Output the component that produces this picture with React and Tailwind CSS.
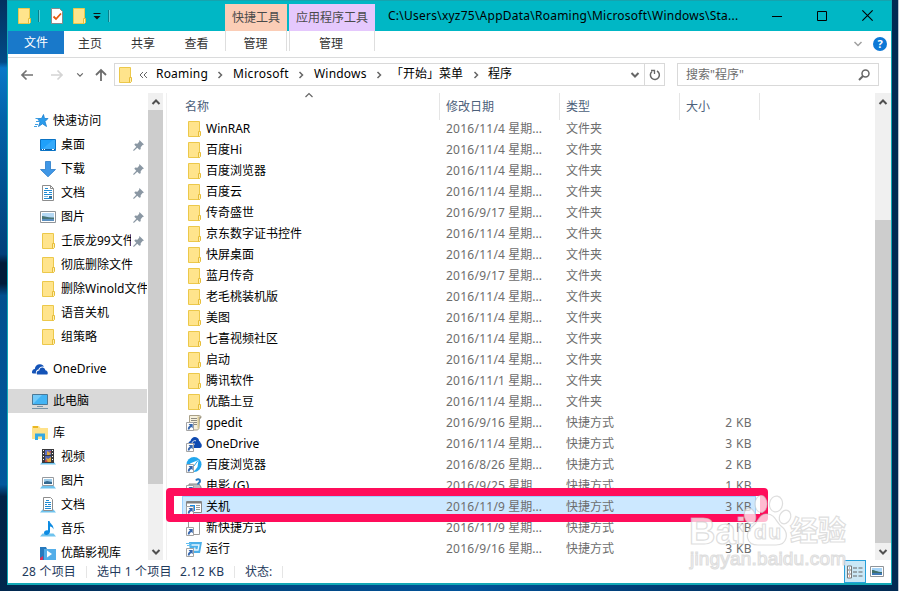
const quickAccess = [
  { name: "桌面", icon: "desktop", pinned: true },
  { name: "下载", icon: "download", pinned: true },
  { name: "文档", icon: "document", pinned: true },
  { name: "图片", icon: "picture", pinned: true },
  { name: "壬辰龙99文件", icon: "folder", pinned: true },
  { name: "彻底删除文件", icon: "folder" },
  { name: "删除Winold文件", icon: "folder" },
  { name: "语音关机", icon: "folder" },
  { name: "组策略", icon: "folder" },
];

const libraries = [
  { name: "视频", icon: "libVideo" },
  { name: "图片", icon: "libPicture" },
  { name: "文档", icon: "libDocument" },
  { name: "音乐", icon: "libMusic" },
  { name: "优酷影视库", icon: "libYouku" },
];

const files = [
  { name: "WinRAR", date: "2016/11/4", icon: "folder" },
  { name: "百度Hi", date: "2016/11/4", icon: "folder" },
  { name: "百度浏览器", date: "2016/11/4", icon: "folder" },
  { name: "百度云", date: "2016/11/4", icon: "folder" },
  { name: "传奇盛世", date: "2016/9/17", icon: "folder" },
  { name: "京东数字证书控件", date: "2016/11/4", icon: "folder" },
  { name: "快屏桌面", date: "2016/11/4", icon: "folder" },
  { name: "蓝月传奇", date: "2016/9/17", icon: "folder" },
  { name: "老毛桃装机版", date: "2016/11/4", icon: "folder" },
  { name: "美图", date: "2016/11/4", icon: "folder" },
  { name: "七喜视频社区", date: "2016/11/4", icon: "folder" },
  { name: "启动", date: "2016/11/4", icon: "folder" },
  { name: "腾讯软件", date: "2016/11/1", icon: "folder" },
  { name: "优酷土豆", date: "2016/11/4", icon: "folder" },
  { name: "gpedit", date: "2016/9/16", icon: "script", size: "2 KB" },
  { name: "OneDrive", date: "2016/11/4", icon: "cloudLink", size: "3 KB" },
  { name: "百度浏览器", date: "2016/8/26", icon: "browser", size: "2 KB" },
  { name: "电影 (G)", date: "2016/9/25", icon: "drive", size: "1 KB" },
  { name: "关机", date: "2016/11/9", icon: "app", size: "3 KB", selected: true },
  { name: "新快捷方式", date: "2016/11/9", icon: "blank", size: "1 KB" },
  { name: "运行", date: "2016/9/16", icon: "run", size: "3 KB" },
];

function LinkArrow() {
  return (
    <g>
      <path d="M.5 7.500h7v8h-7z" fill="#fff" stroke="#a3a3a3" />
      <path d="M2.500 9h4.200v4.200L5.400 12C4.300 12.500 3.800 13.200 3.500 14.500H1.800c0-2 .7-3 2.200-3.900z" fill="#3566ae" />
    </g>
  );
}

function LibraryStand() {
  return <path d="M2.500 12.500h11l2.500 3H0z" fill="#6fc3ee" />;
}

const glyphs = {
  folder: (
    <g>
      <path d="M2.500.5h11v15h-11z" fill="#ffe48c" stroke="#ecc84a" />
      <path d="M12.500 10.500h2v4l-1 1h-1z" fill="#fff0b0" stroke="#e6bd3a" />
    </g>
  ),
  desktop: (
    <g>
      <path d="M.5 2.500h15v11H.5z" fill="#1ea0fa" stroke="#0b73c4" />
      <path d="M1 13L13 3h2v10z" fill="#35aafb" />
      <path d="M1 12.500h14" stroke="#0b5fa8" />
      <path d="M2 12.500h1M4 12.500h1M12 12.500h2" stroke="#fff" />
    </g>
  ),
  download: <path d="M5.500.5h5v8h5L8 15.800.5 8.500h5z" fill="#3f97e6" stroke="#2a7bc8" strokeWidth=".8" />,
  document: (
    <g>
      <path d="M2.500.5h8l3 3v12h-11z" fill="#fff" stroke="#8d8d8d" />
      <path d="M10.500.5v3h3" fill="none" stroke="#8d8d8d" />
      <path d="M5 3.500h3M4 5.500h8M4 7.500h3M9 7.500h3M4 9.500h8M4 13.500h8" stroke="#1f8ad2" />
      <path d="M4 11.500h4" stroke="#7bb6dd" />
      <path d="M9 11h3v2H9z" fill="#3b6b8c" />
    </g>
  ),
  picture: (
    <g>
      <path d="M.5 2.500h15v11H.5z" fill="#fff" stroke="#8f9499" />
      <path d="M2 4h12v8H2z" fill="#b5d9f5" />
      <path d="M2 7c3 0 6 2 12 1.500V10H2z" fill="#477577" />
      <path d="M2 10h12v2H2z" fill="#5b8fc0" />
    </g>
  ),
  star: (
    <g>
      <path d="M9.500 1.500l1 4H14l-3 3 1.500 5-4-2.700L4.500 13.500 6 9 3.500 5.500h4z" fill="#2a9cec" stroke="#1a7fcf" strokeWidth=".8" />
      <path d="M1.500 5.500h3M2 8.500h3M1 11.500h3M0 13.500h3" stroke="#3f9fe3" />
    </g>
  ),
  cloud: (
    <g>
      <path d="M0 12c-.3-2.200 1-3.800 2.800-4C3 5 5.500 3 8 3.200c2 .1 3.300 1.200 4 2.500-3-.8-5 .8-5.500 2.800C4.500 8.800 3.500 10.500 4 12.500H1z" fill="#1453b7" />
      <path d="M5 13.500c-1-2 .3-4 2.300-4C7.500 7.200 9.500 6 11.300 6.700c1.300.4 1.900 1.500 2 2.500 2 .1 3.200 2.500 2 4.300z" fill="#1453b7" />
    </g>
  ),
  computer: (
    <g>
      <path d="M.5 1.500h15v10H.5z" fill="#43b4f4" stroke="#4b7896" />
      <path d="M1 11V2h9z" fill="#73caf9" />
      <path d="M5 13.500h6M0 15.500h16" stroke="#7793a6" />
    </g>
  ),
  library: (
    <g>
      <path d="M0 1h7l1.500 2H16v11H0z" fill="#ffe28a" />
      <path d="M1 2h5" stroke="#e2a800" strokeWidth="1.500" />
      <path d="M3 15V8.500h10V15h-3v-3.500H6V15z" fill="#35a9e4" />
    </g>
  ),
  libVideo: (
    <g>
      <LibraryStand />
      <path d="M2 0h12v14H2z" fill="#3a3a3d" />
      <path d="M5 1h6v5H5z" fill="#5b6fc4" />
      <path d="M5 7h6v6H5z" fill="#4a62b4" />
      <path d="M7 2l4 2.500-2 1.500H7zM6 8.500l2 1.500 3-2v5H7z" fill="#e0a63e" />
      <path d="M9 2h2v2zM5 11l3 1-1 1H5z" fill="#c7443a" />
      <path d="M3.500 1v12M12.500 1v12" stroke="#fff" strokeDasharray="1 2" />
    </g>
  ),
  libPicture: (
    <g>
      <LibraryStand />
      <path d="M2.500 4.500h11v8h-11z" fill="#fff" stroke="#969a9f" />
      <path d="M4 6h8v5H4z" fill="#9ccbe9" />
      <path d="M4 9l3-1 5 1v2H4z" fill="#35698f" />
    </g>
  ),
  libDocument: (
    <g>
      <LibraryStand />
      <path d="M3.500.5h7l2 2v11h-9z" fill="#fff" stroke="#8d8d8d" />
      <path d="M6 3.500h3M5 5.500h6M5 7.500h2M8 7.500h3M5 9.500h6M5 11.500h6" stroke="#1f8ad2" />
    </g>
  ),
  libMusic: (
    <g>
      <LibraryStand />
      <path d="M8 0h1.500c.5 3 4.500 4 4 8.500-.6-2-2-3-3.500-3v5c0 4-6 4.500-6 1.500 0-2 2-3 4-2.500z" fill="#0d8be2" />
    </g>
  ),
  libYouku: (
    <g>
      <path d="M0 2h6l1 2h8v12H0z" fill="#2779bd" />
      <path d="M4 4h12v12H4z" fill="#54aee9" />
      <path d="M0 13l3-2v5H0z" fill="#d8315b" />
      <path d="M7 5.500L12 9l-5 3.500z" fill="#fff" />
    </g>
  ),
  script: (
    <g>
      <path d="M3.500.500h10c2 0 2 3 0 3l-.5 9c0 2-1 2.500-3 2.500H3.500z" fill="#f7f1dc" stroke="#aaa188" />
      <path d="M5 3.500h6M5 5.500h6M5 7.500h6M8 9.500h3" stroke="#8d8b80" />
      <path d="M11.500 1.500h1.500v12h-1.500z" fill="#d9c891" />
      <path d="M13.500 1.500h1v2h-1z" fill="#6e6857" />
      <LinkArrow />
    </g>
  ),
  cloudLink: (
    <g>
      <path d="M2 9c0-2 1-3.500 2.500-4C5 1.500 9-.5 11.500 2c1 .8 1.500 1.700 1.500 3 1 .3 1.500 1 1.500 2 2 1 1.500 5-.5 5H5z" fill="#0f4ab0" />
      <path d="M6 7.500c0-2 2-3.500 4-2.700M9 8c-1 0-2 .8-2 2" fill="none" stroke="#fff" strokeWidth=".8" />
      <LinkArrow />
    </g>
  ),
  browser: (
    <g>
      <circle cx="8" cy="7.500" r="7.500" fill="#22a7ee" />
      <path d="M4 6.500l8.500-3.500-1 7-3 4-2-4.500z" fill="#fff" />
      <path d="M8 9l4-5.500" stroke="#22a7ee" />
      <LinkArrow />
    </g>
  ),
  drive: (
    <g>
      <path d="M3 6h10l2 3v5H3z" fill="#b9bec3" stroke="#888" />
      <path d="M10 2.500c1-2 4-1.500 4 .5S12 4.500 12 6.500" fill="none" stroke="#2576be" strokeWidth="2" />
      <LinkArrow />
    </g>
  ),
  app: (
    <g>
      <path d="M.5 2.500h15v11H.5z" fill="#fff" stroke="#888" />
      <path d="M1 3.500h14" stroke="#808080" strokeWidth="2" />
      <path d="M4 6h5v6H4z" fill="#188ce6" />
      <path d="M10 6.500h4M10 8.500h4M10 10.500h4" stroke="#999" />
      <LinkArrow />
    </g>
  ),
  blank: (
    <g>
      <path d="M2.500.500h9l2 2v12h-11z" fill="#fff" stroke="#999" />
      <LinkArrow />
    </g>
  ),
  run: (
    <g>
      <path d="M3 1h13l-2 11H4z" fill="#4cb0e9" />
      <path d="M0 2.500h5M1 4.500h4" stroke="#62bff0" strokeWidth="1.200" />
      <path d="M5.500 4h7.500l-1 5H8.500L9 6.500" fill="none" stroke="#e4f5ff" strokeWidth="1.300" />
      <LinkArrow />
    </g>
  ),
};

function Icon({ name, className = "" }) {
  return (
    <svg viewBox="0 0 16 16" className={`size-4 shrink-0 ${className}`}>
      {glyphs[name]}
    </svg>
  );
}

function Chevron({ d, className = "", color = "#666", width = 1.5 }) {
  return (
    <svg viewBox="0 0 10 10" className={`size-2.5 shrink-0 ${className}`}>
      <path d={d} fill="none" stroke={color} strokeWidth={width} />
    </svg>
  );
}

const DOWN = "M1.500 3L5 6.500L8.500 3";
const UP = "M1.500 7L5 3.500L8.500 7";
const RIGHT = "M3.500 2L6.500 5L3.500 8";

function TitleBar() {
  return (
    <div className="flex h-[31px] shrink-0 border-t border-[#16a3ae] bg-[#00b7c5]">
      <div className="flex w-[217px] items-center pl-[8px]">
        <Icon name="folder" />
        <span className="ml-[6px] h-3 w-[2px] border-l border-[#07808c] bg-[#5cd0d9]" />
        <svg viewBox="0 0 16 16" className="ml-[9px] size-4">
          <path d="M2.500.5h8l3 3v12h-11z" fill="#fff" stroke="#8a8a8a" />
          <path d="M4.500 8.500l2.500 2.500 5-5.500" fill="none" stroke="#e8590c" strokeWidth="1.800" />
        </svg>
        <Icon name="folder" className="ml-[6px]" />
        <svg viewBox="0 0 8 8" className="ml-[6px] size-2">
          <path d="M.5 1.500h7" stroke="#111" />
          <path d="M.5 4h7L4 7.500z" fill="#111" />
        </svg>
        <span className="ml-[7px] h-3 w-[2px] border-l border-[#07808c] bg-[#5cd0d9]" />
      </div>
      <div className="mt-[3px] flex w-[62px] items-center justify-center bg-[#fbcdb6] text-[#4a4a4a]">快捷工具</div>
      <div className="mt-[3px] ml-[2px] flex w-[86px] items-center justify-center bg-[#e5c8fd] text-[#4a4a4a]">应用程序工具</div>
      <div className="ml-[13px] flex h-[30px] w-[352px] items-center whitespace-nowrap text-black">
        <span className="tracking-[0.24px]">C:\Users\xyz75\AppData\Roaming\Microsoft\Windows\Sta...</span>
      </div>
      <div className="ml-[32px] flex h-[29px] items-center gap-[35px]">
        <svg viewBox="0 0 10 10" className="size-[10px]"><path d="M0 5.500h10" stroke="#000" /></svg>
        <svg viewBox="0 0 10 10" className="size-[10px]"><path d="M.5.5h9v9h-9z" fill="none" stroke="#000" /></svg>
        <svg viewBox="0 0 10 10" className="size-[11px]"><path d="M.3.300l9.400 9.400M9.700.300L.3 9.700" stroke="#000" /></svg>
      </div>
    </div>
  );
}

function RibbonTabs() {
  return (
    <div className="flex h-[27px] shrink-0 border-b border-[#dadbdc] text-[#333]">
      <div className="flex h-[23px] w-14 items-center justify-center bg-[#1979ca] text-white">文件</div>
      <div className="flex h-[25px] w-[52px] items-center justify-center">主页</div>
      <div className="flex h-[25px] w-[54px] items-center justify-center">共享</div>
      <div className="flex h-[25px] w-[53px] items-center justify-center">查看</div>
      <div className="ml-[2px] flex h-5 w-[62px] items-center justify-center border-x border-[#dedede] pt-[5px] pr-px">管理</div>
      <div className="ml-[2px] flex h-5 w-[86px] items-center justify-center border-x border-[#dedede] pt-[5px] pr-[2px]">管理</div>
      <div className="ml-auto flex items-center gap-[10px] pr-[4px]">
        <Chevron d={DOWN} color="#a0a0a0" />
        <span className="flex size-[14px] items-center justify-center rounded-full bg-[#0d78d6] text-[11px] font-bold text-white">?</span>
      </div>
    </div>
  );
}

function Crumb({ children, className }) {
  return (
    <span className={`mb-px shrink-0 whitespace-nowrap ${className}`}>{children}</span>
  );
}

function AddressBar() {
  return (
    <div className="flex h-[35px] shrink-0 items-center pb-[2px]">
      <svg viewBox="0 0 14 12" className="ml-[12px] h-3 w-[14px]">
        <path d="M13 6H2M6.500 1.500L2 6l4.500 4.500" fill="none" stroke="#737373" strokeWidth="1.700" />
      </svg>
      <svg viewBox="0 0 14 12" className="ml-[16px] h-3 w-[14px]">
        <path d="M1 6h11M7.500 1.500L12 6l-4.500 4.500" fill="none" stroke="#d4d4d4" strokeWidth="1.700" />
      </svg>
      <Chevron d={DOWN} className="ml-[12px] !size-2" />
      <svg viewBox="0 0 12 14" className="ml-[11px] h-[14px] w-3">
        <path d="M6 13V2M1 7l5-5 5 5" fill="none" stroke="#6c6c6c" strokeWidth="1.800" />
      </svg>
      <div className="ml-[7px] flex h-[23px] w-[551px] items-center border border-[#d9d9d9] text-black">
        <Icon name="folder" className="ml-[2px]" />
        <span className="ml-[6px] flex w-[9px]">
          <svg viewBox="0 0 9 8" className="h-2 w-[9px]">
            <path d="M4 1L1 4l3 3M8 1L5 4l3 3" fill="none" stroke="#666" />
          </svg>
        </span>
        <Crumb className="ml-[8px] w-[52px] tracking-[0.2px]">Roaming</Crumb>
        <Chevron d={RIGHT} className="ml-[7px]" />
        <Crumb className="ml-[8px] w-[57px] tracking-[0.3px]">Microsoft</Crumb>
        <Chevron d={RIGHT} className="ml-[6px]" />
        <Crumb className="ml-[8px] w-[54px] tracking-[0.2px]">Windows</Crumb>
        <Chevron d={RIGHT} className="ml-[6px]" />
        <Crumb className="ml-[7px] w-[75px]">「开始」菜单</Crumb>
        <Chevron d={RIGHT} className="ml-[5px]" />
        <Crumb className="ml-[7px] w-6">程序</Crumb>
        <Chevron d={DOWN} className="mr-[4px] ml-auto" width={2} />
        <div className="flex h-full w-5 items-center justify-center border-l border-[#d9d9d9]">
          <svg viewBox="0 0 12 12" className="size-3">
            <path d="M3 2.500A4.500 4.500 0 1 0 8 2" fill="none" stroke="#666" strokeWidth="1.500" />
            <path d="M2 1.500h3.500V5" fill="none" stroke="#666" strokeWidth="1.300" />
          </svg>
        </div>
      </div>
      <div className="ml-[12px] flex h-[23px] w-[202px] items-center justify-between border border-[#d9d9d9] pr-[8px] pl-[8px] text-[#6d6d6d]">
        <span>搜索"程序"</span>
        <svg viewBox="0 0 12 12" className="size-3">
          <circle cx="7.500" cy="4.500" r="3.500" fill="none" stroke="#666" strokeWidth="1.500" />
          <path d="M5 7L1 11" stroke="#666" strokeWidth="2" />
        </svg>
      </div>
    </div>
  );
}

function Pin() {
  return (
    <svg viewBox="0 0 10 10" className="size-[11px] shrink-0">
      <path d="M5.800 0L10 4 8.700 4.600 7 6.500 7 8.500 5.700 8.800 3.900 7 1 9.700H.2V9L3 6.100 1.200 4.400 2 3.200l2 .2L5.600 1.500z" fill="#8a97a3" />
    </svg>
  );
}

function TreeItem({ item }) {
  return (
    <div className="flex h-6 shrink-0 items-center pl-8">
      <Icon name={item.icon} />
      <span className={`ml-[5px] overflow-hidden whitespace-nowrap ${item.pinned ? "w-[70px]" : "w-[86px]"}`}>{item.name}</span>
      {item.pinned && <span className="ml-[2px] flex"><Pin /></span>}
    </div>
  );
}

function TreeRoot({ icon, name, className = "" }) {
  return (
    <div className={`flex h-6 shrink-0 items-center pl-6 ${className}`}>
      <Icon name={icon} />
      <span className="ml-[5px] tracking-[0.05px]">{name}</span>
    </div>
  );
}

function Scrollbar({ before, thumb, className }) {
  return (
    <div className={`flex shrink-0 flex-col items-center bg-[#f0f0f0] ${className}`}>
      <div className="flex h-[17px] shrink-0 items-center"><Chevron d={UP} color="#505050" width={2} /></div>
      <div className={before} />
      <div className={`w-full bg-[#cdcdcd] ${thumb}`} />
      <div className="mt-auto flex h-[17px] shrink-0 items-center"><Chevron d={DOWN} color="#505050" width={2} /></div>
    </div>
  );
}

function Sidebar() {
  return (
    <div className="flex h-[467px] w-[140px] shrink-0 flex-col overflow-hidden pt-4 text-black">
      <TreeRoot icon="star" name="快速访问" className="pl-[26px] [&>span]:ml-[3px]" />
      {quickAccess.map((item) => (
        <TreeItem key={item.name} item={item} />
      ))}
      <TreeRoot icon="cloud" name="OneDrive" className="mt-2" />
      <TreeRoot icon="computer" name="此电脑" className="mt-2 mr-px bg-[#d9d9d9]" />
      <TreeRoot icon="library" name="库" className="mt-2" />
      {libraries.map((item) => (
        <TreeItem key={item.name} item={item} />
      ))}
    </div>
  );
}

function FileRow({ file }) {
  return (
    <div className={`flex h-[21px] shrink-0 items-center ${file.selected ? "bg-[#cce8ff] outline-1 -outline-offset-1 outline-[#99d1ff]" : ""}`}>
      <Icon name={file.icon} className="ml-1" />
      <span className="ml-1 w-[240px] whitespace-nowrap text-black">{file.name}</span>
      <span className="w-[120px] whitespace-nowrap text-[#6d6d6d]">
        <span className="tracking-[0.25px]">{file.date}</span> 星期...
      </span>
      <span className="w-[120px] text-[#6d6d6d]">{file.size ? "快捷方式" : "文件夹"}</span>
      <span className="w-[66px] text-right tracking-[0.4px] text-[#6d6d6d]">{file.size}</span>
    </div>
  );
}

function FileList() {
  return (
    <div className="flex h-[467px] min-w-0 flex-1 flex-col">
      <div className="flex h-[25px] shrink-0 pl-[18px] text-[#4c607a]">
        <div className="relative flex h-[27px] w-[255px] items-center border-r border-[#e5e5e5]">
          名称
          <Chevron d={UP} className="absolute -top-[3px] left-[119px]" width={1.2} />
        </div>
        <div className="flex h-[27px] w-[120px] items-center border-r border-[#e5e5e5] pl-[6px]">修改日期</div>
        <div className="flex h-[27px] w-[120px] items-center border-r border-[#e5e5e5] pl-[6px]">类型</div>
        <div className="flex h-[27px] w-[80px] items-center border-r border-[#e5e5e5] pl-[6px]">大小</div>
      </div>
      <div className="ml-[15px] flex w-[574px] flex-col">
        {files.map((file, i) => (
          <FileRow key={i} file={file} />
        ))}
      </div>
    </div>
  );
}

function StatusBar() {
  return (
    <div className="flex h-[23px] shrink-0 items-center pl-[14px] text-[#1e395b]">
      <span className="w-[64px] whitespace-nowrap tracking-[0.2px]">28 个项目</span>
      <span className="h-3 w-px bg-[#e5e5e5]" />
      <span className="ml-[10px] w-[83px] whitespace-nowrap tracking-[0.2px]">选中 1 个项目</span>
      <span className="w-[54px] whitespace-nowrap tracking-[0.3px]">2.12 KB</span>
      <span className="h-3 w-px bg-[#e5e5e5]" />
      <span className="ml-[10px] w-[37px]">状态:</span>
      <span className="h-3 w-px bg-[#e5e5e5]" />
      <div className="ml-auto flex items-center pr-[7px]">
        <div className="flex h-[23px] w-[22px] items-center justify-center border border-[#26a0da] bg-[#cbe8f6]">
          <svg viewBox="0 0 16 14" className="h-[14px] w-4">
            <path d="M.5 1h4v12h-4zM.5 5h4M.5 9h4" fill="#fff" stroke="#777" />
            <path d="M2 3h1M2 7h1" stroke="#3b78a8" />
            <path d="M2 11h1" stroke="#d04020" />
            <path d="M6 3h4M11.500 3h4M6 7h4M11.500 7h4M6 11h4M11.500 11h4" stroke="#666" />
          </svg>
        </div>
        <svg viewBox="0 0 14 11" className="ml-1 h-[11px] w-[14px]">
          <path d="M.5.5h13v10H.5z" fill="#fff" stroke="#8f9499" />
          <path d="M2 2h10v7H2z" fill="#a6d4f7" />
          <path d="M2 4c3 0 5 2 10 2v1H2z" fill="#3f6f6a" />
          <path d="M2 7h10v2H2z" fill="#3f79b5" />
        </svg>
      </div>
    </div>
  );
}

function Watermark() {
  return (
    <svg viewBox="0 0 170 80" className="absolute top-[493px] left-[684px] h-20 w-[170px]">
      <g fill="#fff" fillOpacity=".72" stroke="#c8c8c8" strokeOpacity=".6" strokeWidth="1.200">
        <ellipse cx="77" cy="11" rx="6" ry="8.500" />
        <ellipse cx="92" cy="11" rx="6.500" ry="8" transform="rotate(10 92 11)" />
        <ellipse cx="66" cy="23" rx="5.500" ry="8" transform="rotate(-15 66 23)" />
        <ellipse cx="101" cy="24" rx="5.500" ry="7" transform="rotate(25 101 24)" />
        <path d="M83 21c8 0 9 8 14 12 9 7 6 19-5 19H74c-12 0-14-12-5-19 6-5 6-12 14-12z" />
        <text x="5" y="51" fontSize="36" fontWeight="700" fontFamily="Liberation Sans" textLength="57" lengthAdjust="spacingAndGlyphs">Bai</text>
        <text x="70" y="46" fontSize="21" fontWeight="700" fontFamily="Liberation Sans" textLength="27">du</text>
        <text x="106" y="48" fontSize="28" fontWeight="700" fontFamily="Noto Sans CJK SC" textLength="56">经验</text>
        <text x="6" y="72" fontSize="19" fontFamily="Liberation Sans" textLength="156">jingyan.baidu.com</text>
      </g>
    </svg>
  );
}

export default function App() {
  return (
    <div className="relative h-[591px] w-[899px] overflow-hidden bg-[linear-gradient(90deg,#01274d,#01457f_28%,#01539a_52%,#013a70_75%,#012a52)] pl-[7px] font-['Noto_Sans','Noto_Sans_CJK_SC',sans-serif] text-[12px] leading-[16px]">
      <div className="absolute top-0 left-0 h-[591px] w-[7px] bg-[linear-gradient(180deg,#02315f,#024b87_10.5%,#0878c8_11.500%,#0362a9_20%,#01407a_43%,#011c39_44.500%,#011c39_48%,#01508f_50%,#01589c_82%,#012347_84%,#01274d)]" />
      <div className="absolute top-0 right-0 h-[591px] w-px bg-[#b9c3cf]" />
      <div className="flex h-[585px] w-[885px] flex-col border-x border-b-2 border-[#12a8b6] bg-white">
        <TitleBar />
        <RibbonTabs />
        <AddressBar />
        <div className="flex h-[467px] shrink-0">
          <Sidebar />
          <Scrollbar before="h-0" thumb="h-[374px]" className="w-4 border-r border-white" />
          <div className="ml-[2px] w-px bg-[#f0f0f0]" />
          <FileList />
          <Scrollbar before="h-[110px]" thumb="h-[323px]" className="w-4" />
        </div>
        <StatusBar />
      </div>
      <div className="absolute top-[488px] left-[166px] h-[34px] w-[602px] rounded-[4px] border-8 border-[#ff0d5b]" />
      <Watermark />
    </div>
  );
}
